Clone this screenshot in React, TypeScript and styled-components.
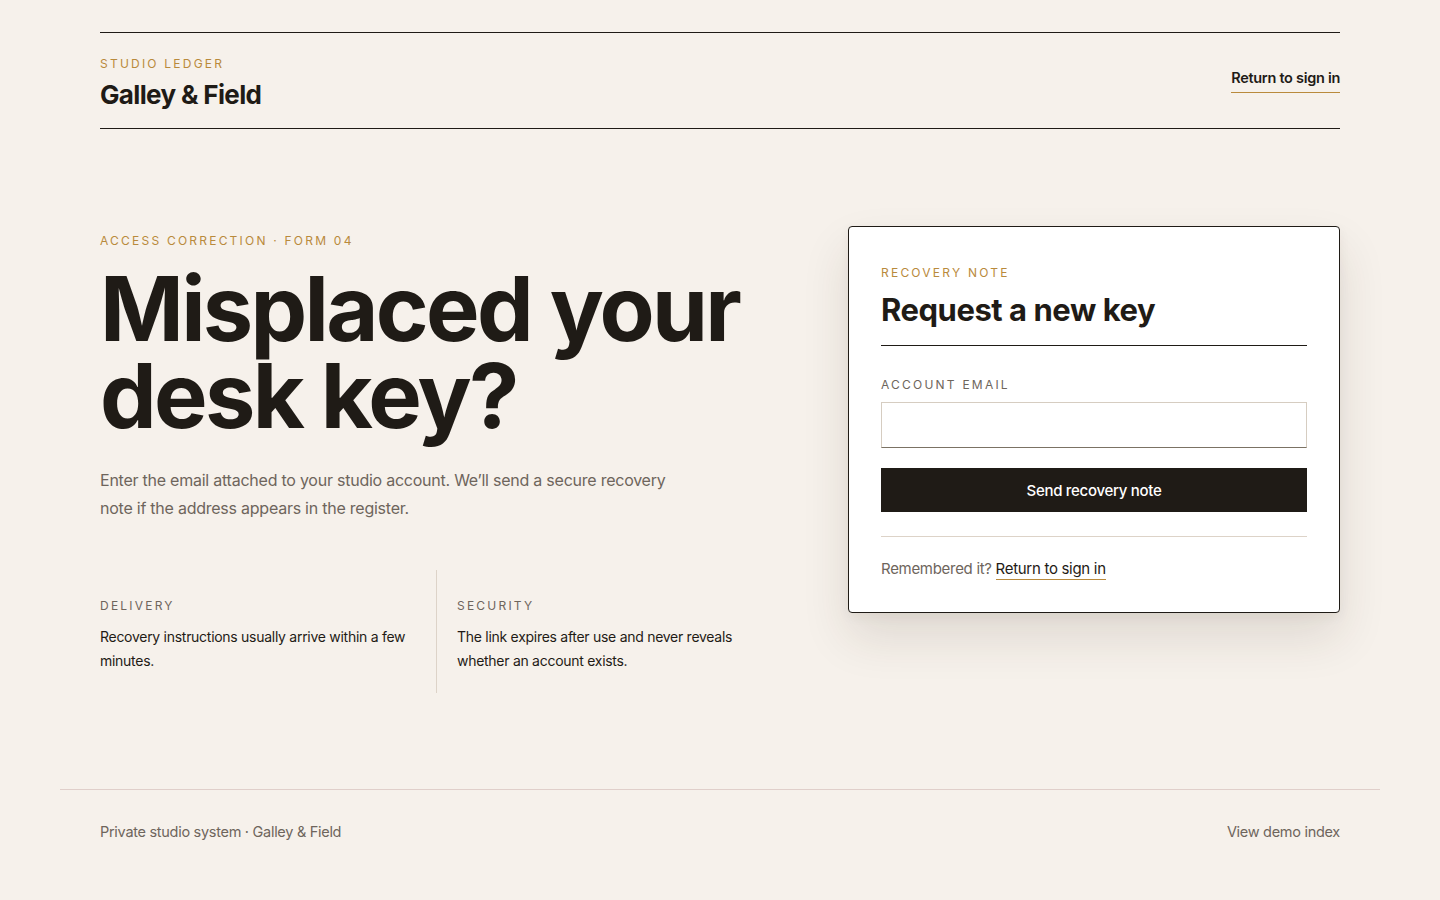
import * as React from "react";
import styled, { createGlobalStyle } from "styled-components";

const colors = {
  page: "#f6f1eb",
  ink: "#1f1b16",
  muted: "#6e655c",
  gold: "#b98a3c",
  rule: "#ddd3c8",
  footerRule: "#e0cfca",
};

const GlobalStyle = createGlobalStyle`
  * { box-sizing: border-box; }
  html, body { margin: 0; padding: 0; }
  body {
    background: ${colors.page};
    color: ${colors.ink};
    font-family: Inter, "Noto Sans", sans-serif;
    -webkit-font-smoothing: antialiased;
  }
`;

const Page = styled.div`
  min-height: 900px;
  padding-top: 32px;
  display: flex;
  flex-direction: column;
`;

const Header = styled.header`
  margin: 0 100px;
  border-top: 1px solid ${colors.ink};
  border-bottom: 1px solid ${colors.ink};
  height: 97px;
  display: flex;
  align-items: center;
  justify-content: space-between;
`;

const Brand = styled.div`
  display: flex;
  flex-direction: column;
  gap: 7px;
  padding-top: 6px;
`;

const Eyebrow = styled.div<{ $tone?: "gold" | "muted" }>`
  font-size: 12px;
  line-height: 16px;
  letter-spacing: 0.185em;
  text-transform: uppercase;
  color: ${(p) => (p.$tone === "muted" ? colors.muted : colors.gold)};
`;

const BrandName = styled.div`
  font-size: 26px;
  line-height: 32px;
  font-weight: 700;
  letter-spacing: -0.025em;
`;

const UnderLink = styled.a<{ $strong?: boolean }>`
  color: ${colors.ink};
  text-decoration: none;
  font-size: ${(p) => (p.$strong ? "14.5px" : "15px")};
  font-weight: ${(p) => (p.$strong ? 600 : 400)};
  letter-spacing: -0.02em;
  padding-bottom: ${(p) => (p.$strong ? "6px" : "1px")};
  border-bottom: 1px solid ${colors.gold};
  cursor: pointer;
`;

const HeaderLink = styled(UnderLink)`
  margin-top: 1px;
`;

const Main = styled.main`
  margin: 0 100px;
  padding: 97px 0 96px;
  display: grid;
  grid-template-columns: minmax(0, 1fr) 492px;
  gap: 88px;
  align-items: start;
`;

const Intro = styled.section`
  padding-top: 7px;
`;

const Headline = styled.h1`
  margin: 16px 0 0;
  font-size: 90px;
  line-height: 87px;
  font-weight: 700;
  letter-spacing: -0.03em;
`;

const Lede = styled.p`
  margin: 27px 0 0;
  max-width: 600px;
  font-size: 16px;
  line-height: 28px;
  color: ${colors.muted};
  letter-spacing: -0.015em;
`;

const Facts = styled.div`
  margin-top: 48px;
  width: 672px;
  display: grid;
  grid-template-columns: 1fr 1fr;
`;

const Fact = styled.div<{ $divided?: boolean }>`
  padding: 28px ${(p) => (p.$divided ? "20px" : "24px")} 20px
    ${(p) => (p.$divided ? "20px" : "0")};
  border-left: ${(p) => (p.$divided ? `1px solid ${colors.rule}` : "none")};
`;

const FactText = styled.p`
  margin: 11px 0 0;
  font-size: 14px;
  line-height: 24px;
  letter-spacing: -0.02em;
  color: ${colors.ink};
`;

const Card = styled.section`
  background: #fff;
  border: 1px solid ${colors.ink};
  border-radius: 4px;
  padding: 38px 32px 33px;
  box-shadow: 0 24px 48px rgba(60, 45, 25, 0.12), 0 4px 12px rgba(60, 45, 25, 0.05);
`;

const CardTitle = styled.h2`
  margin: 9px 0 0;
  padding-bottom: 15px;
  border-bottom: 1px solid ${colors.ink};
  font-size: 31px;
  line-height: 40px;
  font-weight: 700;
  letter-spacing: -0.015em;
`;

const Field = styled.label`
  display: flex;
  flex-direction: column;
  gap: 9px;
  margin-top: 31px;
`;

const Input = styled.input`
  height: 46px;
  border: 1px solid #d6cdc1;
  border-bottom-color: #7b7264;
  border-radius: 0;
  background: #fff;
  padding: 0 14px;
  font: inherit;
  font-size: 15px;
  outline: none;
`;

const Submit = styled.button`
  margin-top: 20px;
  width: 100%;
  height: 44px;
  border: none;
  background: ${colors.ink};
  color: #fff;
  font-family: inherit;
  font-size: 15px;
  font-weight: 500;
  letter-spacing: -0.02em;
  cursor: pointer;
`;

const CardFoot = styled.div`
  margin-top: 24px;
  padding-top: 22px;
  border-top: 1px solid ${colors.rule};
  font-size: 15px;
  line-height: 20px;
  letter-spacing: -0.02em;
  color: ${colors.muted};
`;

const Footer = styled.footer`
  margin: 0 60px;
  padding: 32px 40px 48px;
  border-top: 1px solid ${colors.footerRule};
  display: flex;
  justify-content: space-between;
  font-size: 14.5px;
  line-height: 20px;
  letter-spacing: -0.02em;
  color: ${colors.muted};
`;

const FooterLink = styled.a`
  color: ${colors.muted};
  text-decoration: none;
  cursor: pointer;
`;

export default function App() {
  return (
    <>
      <GlobalStyle />
      <Page>
        <Header>
          <Brand>
            <Eyebrow>Studio Ledger</Eyebrow>
            <BrandName>Galley &amp; Field</BrandName>
          </Brand>
          <HeaderLink $strong>Return to sign in</HeaderLink>
        </Header>

        <Main>
          <Intro>
            <Eyebrow>Access correction · Form 04</Eyebrow>
            <Headline>
              Misplaced your
              <br />
              desk key?
            </Headline>
            <Lede>
              Enter the email attached to your studio account. We’ll send a secure
              recovery note if the address appears in the register.
            </Lede>
            <Facts>
              <Fact>
                <Eyebrow $tone="muted">Delivery</Eyebrow>
                <FactText>Recovery instructions usually arrive within a few minutes.</FactText>
              </Fact>
              <Fact $divided>
                <Eyebrow $tone="muted">Security</Eyebrow>
                <FactText>The link expires after use and never reveals whether an account exists.</FactText>
              </Fact>
            </Facts>
          </Intro>

          <Card>
            <Eyebrow>Recovery note</Eyebrow>
            <CardTitle>Request a new key</CardTitle>
            <Field>
              <Eyebrow $tone="muted">Account email</Eyebrow>
              <Input type="email" />
            </Field>
            <Submit type="button">Send recovery note</Submit>
            <CardFoot>
              Remembered it? <UnderLink>Return to sign in</UnderLink>
            </CardFoot>
          </Card>
        </Main>

        <Footer>
          <span>Private studio system · Galley &amp; Field</span>
          <FooterLink>View demo index</FooterLink>
        </Footer>
      </Page>
    </>
  );
}
